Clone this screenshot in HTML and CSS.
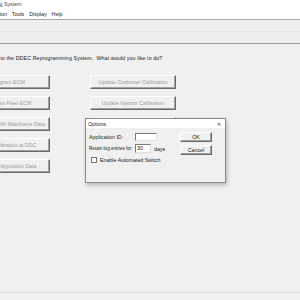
FILE: index.html
```html
<!DOCTYPE html>
<html lang="en">
<head>
  <meta charset="UTF-8">
  <title>DDEC Reprogramming System</title>
  <link rel="stylesheet" href="styles.css">
</head>
<body>
  <div class="titlebar"><span class="title">DDEC Reprogramming System</span></div>
  <div class="menubar">
    <span class="menu first">Session</span>
    <span class="menu">Tools</span>
    <span class="menu">Display</span>
    <span class="menu">Help</span>
  </div>
  <div class="toolbar">
    <div class="toolrow"></div>
    <div class="toolrow"></div>
  </div>

  <div class="main">
    <p class="intro">Welcome to the DDEC Reprogramming System.&nbsp; What would you like to do?</p>
    <div class="actions">
      <button class="act">Reprogram ECM</button>
      <button class="act">Update Customer Calibration</button>
      <button class="act">Reprogram Fleet ECM</button>
      <button class="act">Update Injector Calibration</button>
      <button class="act">Synchronize With Mainframe Data</button>
      <button class="act"></button>
      <button class="act">Update Calibration at DDC</button>
      <button class="act"></button>
      <button class="act">Update Configuration Data</button>
    </div>
  </div>

  <div class="statusbar"></div>

  <!-- Options dialog -->
  <div class="dialog">
    <div class="dlg-title">
      <span>Options</span>
      <span class="close">&#x2715;</span>
    </div>
    <div class="dlg-body">
      <div class="fields">
        <div class="field">
          <label class="lbl">Application ID:</label>
          <span class="input wide"></span>
        </div>
        <div class="field">
          <label class="lbl tight">Retain log entries for:</label>
          <span class="input short">30</span>
          <span class="unit">days</span>
        </div>
        <div class="check">
          <span class="box"></span>
          <span>Enable Automated Switch</span>
        </div>
      </div>
      <div class="dlg-buttons">
        <button class="dbtn">OK</button>
        <button class="dbtn">Cancel</button>
      </div>
    </div>
  </div>
</body>
</html>
```

FILE: styles.css
```css
body {
  margin: 0;
  width: 300px;
  height: 300px;
  overflow: hidden;
  background: #f0f0f0;
  font-family: "Liberation Sans", Arial, sans-serif;
  font-size: 5.3px;
  color: #1a1a1a;
  position: relative;
}
.titlebar {
  height: 8px;
  background: #fff;
  line-height: 8px;
  white-space: nowrap;
  overflow: hidden;
  color: #444;
}
.title {
  margin-left: -52px;
}
.menubar {
  height: 11px;
  background: #fff;
  display: flex;
  gap: 5px;
  align-items: center;
  white-space: nowrap;
  border-bottom: 1px solid #a8a8a8;
}
.menu.first {
  margin-left: -12px;
}
.toolbar {
  background: #efefef;
  border-bottom: 1px solid #9c9c9c;
}
.toolrow {
  height: 11px;
  border-bottom: 1px solid #e4e4e4;
}
.toolrow:last-child {
  border-bottom: none;
}
.main {
  padding-top: 10px;
}
.intro {
  margin: 0 0 0 -24px;
  height: 8px;
  line-height: 8px;
  white-space: nowrap;
  letter-spacing: 0.1px;
  color: #222;
}
.actions {
  margin: 13px 0 0 -40px;
  display: grid;
  grid-template-columns: 90px 86px;
  column-gap: 40px;
  row-gap: 7px;
}
.act {
  height: 14px;
  padding: 0;
  font-family: inherit;
  font-size: 5.3px;
  color: #9a9a9a;
  background: #f0f0f0;
  border: 1px solid;
  border-color: #fff #6a6a6a #6a6a6a #fff;
  box-shadow: inset -1px -1px 0 #a0a0a0;
  white-space: nowrap;
  overflow: hidden;
}
.statusbar {
  position: absolute;
  left: 0;
  right: 0;
  top: 292px;
  height: 8px;
  border-top: 1px solid #dadada;
}

/* dialog */
.dialog {
  position: absolute;
  left: 85px;
  top: 118px;
  width: 139px;
  height: 63px;
  background: #f0f0f0;
  border: 1px solid #8a8a8a;
  box-shadow: 1px 2px 4px rgba(0, 0, 0, 0.25);
}
.dlg-title {
  height: 9px;
  background: #fff;
  display: flex;
  justify-content: space-between;
  align-items: center;
  padding: 0 4px 0 2px;
}
.close {
  font-size: 5px;
  color: #333;
}
.dlg-body {
  display: flex;
  padding: 4px 0 0 3px;
}
.fields {
  display: flex;
  flex-direction: column;
  gap: 3px;
  padding-top: 1px;
}
.field {
  display: flex;
  align-items: center;
}
.lbl {
  width: 46px;
  white-space: nowrap;
}
.lbl.tight {
  font-size: 4.6px;
}
.input {
  height: 8px;
  background: #fff;
  border: 1px solid;
  border-color: #7a7a7a #e0e0e0 #e0e0e0 #7a7a7a;
  box-sizing: border-box;
  line-height: 6px;
  padding-left: 1px;
}
.input.wide {
  width: 22px;
}
.input.short {
  width: 16px;
  height: 9px;
  line-height: 7px;
}
.unit {
  margin-left: 3px;
}
.check {
  display: flex;
  align-items: center;
  gap: 3px;
  margin: 1px 0 0 2px;
  white-space: nowrap;
}
.box {
  width: 4px;
  height: 4px;
  background: #fff;
  border: 1px solid #777;
}
.dlg-buttons {
  margin-left: auto;
  margin-right: 13px;
  display: flex;
  flex-direction: column;
  gap: 3px;
}
.dbtn {
  width: 32px;
  height: 10px;
  padding: 0;
  font-family: inherit;
  font-size: 5.3px;
  color: #222;
  background: #f0f0f0;
  border: 1px solid;
  border-color: #fff #6a6a6a #6a6a6a #fff;
  box-shadow: inset -1px -1px 0 #a0a0a0;
}
```
